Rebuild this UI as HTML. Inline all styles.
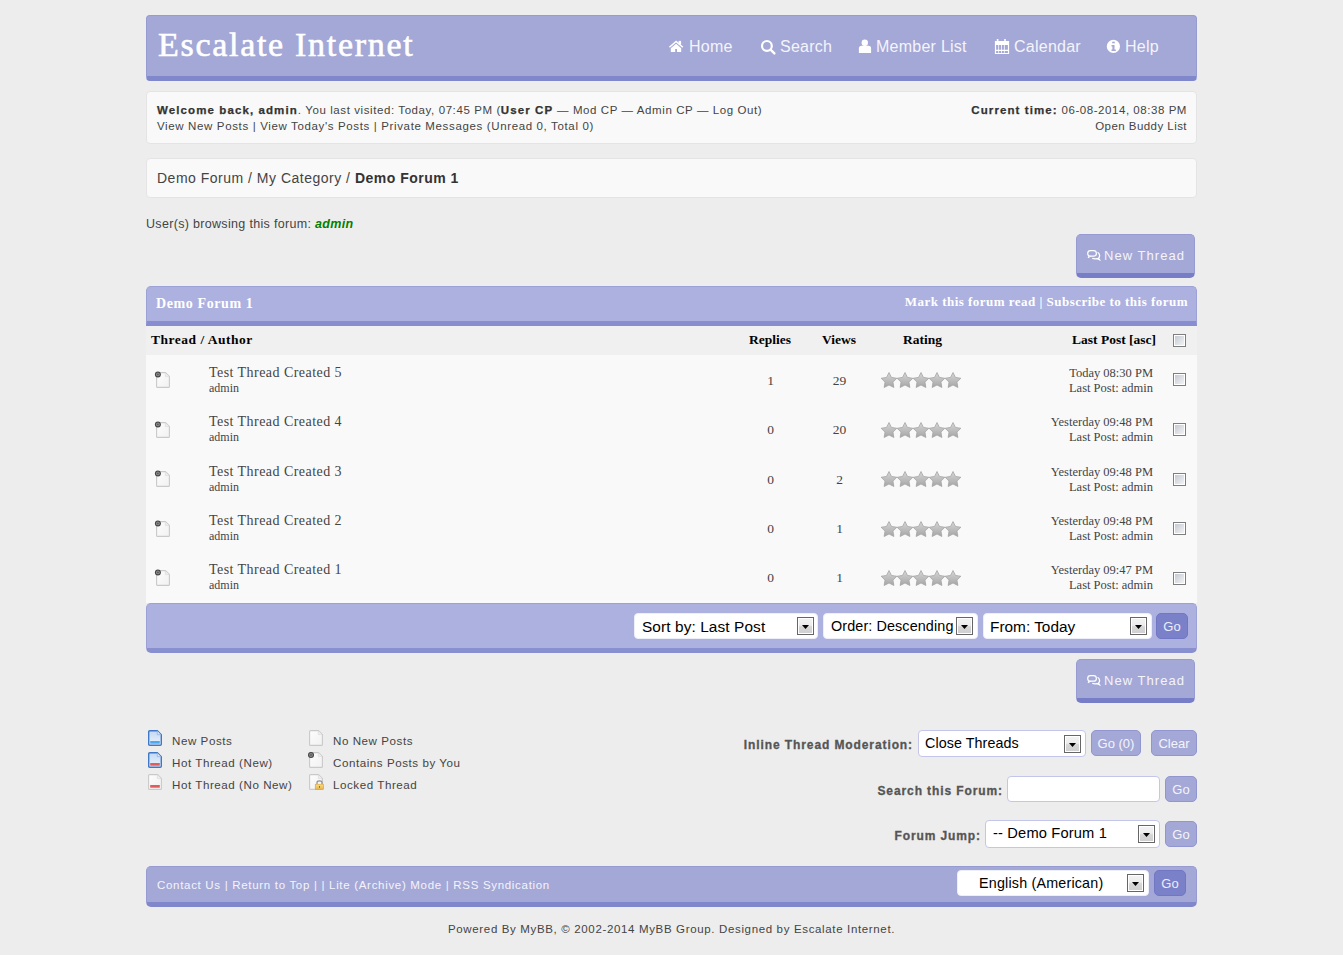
<!DOCTYPE html>
<html><head><meta charset="utf-8">
<style>
*{margin:0;padding:0;box-sizing:border-box}
html,body{width:1343px;height:955px;overflow:hidden;background:#ededed;font-family:"Liberation Sans",sans-serif;color:#444;position:relative}
.a{position:absolute}
.nw{white-space:nowrap}
.serif{font-family:"Liberation Serif",serif}
#hdr{left:146px;top:15px;width:1051px;height:66px;background:#a4a8d6;border:1px solid #969bd2;border-bottom:5px solid #8087cb;border-radius:4px}
#logo{left:158px;top:23px;font-family:"Liberation Serif",serif;font-size:34px;color:#fff;letter-spacing:1.7px;line-height:44px;-webkit-text-stroke:0.6px #fff}
.nav{top:37px;font-size:16px;letter-spacing:0.25px;color:#f4f4fb;line-height:20px}
.panel{background:#f9f9f9;border:1px solid #e4e4e4;border-radius:4px}
.btn{background:#a4a8d6;border:1px solid #969bd2;border-bottom:5px solid #777dc7;border-radius:5px}
.thead{background:#adb1df;border:1px solid #9ca1d6}
.ntt{font-size:13px;letter-spacing:1.05px;color:#f4f4fb;line-height:18px}
.colh{top:332px;font-size:13.5px;font-weight:bold;color:#000;line-height:15px}
.cb{width:13px;height:13px;border:1px solid #7d7f7f;padding:1px;background:linear-gradient(135deg,#c4c9d4,#f3f3f3) content-box,#fff}
.ttl{font-size:14px;color:#444;letter-spacing:0.45px;line-height:16px}
.adm{font-size:12px;color:#444;line-height:14px}
.num{font-size:13.5px;color:#444;text-align:center;line-height:15px}
.lp{font-size:12.5px;color:#444;text-align:right;line-height:15px}
.sel{height:26px;background:#fff;border-radius:4px;border:1px solid #eceef8}
.sel span{position:absolute;top:4px;font-size:15.4px;color:#000;white-space:nowrap;line-height:17px}
.arr{position:absolute;top:3px;width:17px;height:18px;border:1px solid #666;padding:1px;background:linear-gradient(#f2f2f2,#ececec 45%,#d6d6d6 55%,#d0d0d0) content-box,#fff}
.arr:after{content:"";position:absolute;left:4px;top:7px;width:7px;height:4px;background:#000;clip-path:polygon(0 0,100% 0,50% 100%)}
.sel2{border:1px solid #c3c6ea}
.gob{background:#7b81c9;border-radius:5px;color:#eceefa;font-size:13px;text-align:center;line-height:25px;border:1px solid #7177c2}
.lb{height:26px;background:#a4a8d6;border:1px solid #9196d0;border-radius:5px;color:#f4f4fb;font-size:13px;text-align:center;line-height:25px}
.leg{font-size:11.6px;letter-spacing:0.55px;line-height:22px;color:#444;white-space:nowrap}
.vb{color:#333;letter-spacing:1.1px;-webkit-text-stroke:0.25px #333}
.lab{font-size:12px;font-weight:bold;color:#555;letter-spacing:0.9px;-webkit-text-stroke:0.3px #555;line-height:15px}
</style></head><body>
<div id="hdr" class="a"></div>
<div id="logo" class="a nw">Escalate Internet</div>
<div class="a nav nw" style="left:689px">Home</div>
<div class="a nav nw" style="left:780px">Search</div>
<div class="a nav nw" style="left:876px">Member List</div>
<div class="a nav nw" style="left:1014px">Calendar</div>
<div class="a nav nw" style="left:1125px">Help</div>
<div class="a panel" style="left:146px;top:91px;width:1051px;height:53px"></div>
<div class="a nw" style="left:157px;top:102px;font-size:11.5px;letter-spacing:0.59px;line-height:16px"><b class="vb">Welcome back, admin</b>. You last visited: Today, 07:45 PM (<b class="vb">User CP</b> — Mod CP — Admin CP — Log Out)<br><span style="letter-spacing:0.64px">View New Posts | View Today's Posts | Private Messages (Unread 0, Total 0)</span></div>
<div class="a nw" style="right:156px;top:102px;font-size:11.5px;letter-spacing:0.55px;line-height:16px;text-align:right"><b class="vb">Current time:</b> 06-08-2014, 08:38 PM<br><span style="letter-spacing:0.45px">Open Buddy List</span></div>
<div class="a panel" style="left:146px;top:158px;width:1051px;height:40px"></div>
<div class="a nw" style="left:157px;top:169px;font-size:14px;letter-spacing:0.5px;line-height:18px">Demo Forum / My Category / <b style="color:#333">Demo Forum 1</b></div>
<div class="a nw" style="left:146px;top:216px;font-size:12.5px;letter-spacing:0.32px;line-height:16px">User(s) browsing this forum: <b style="color:#008000"><i>admin</i></b></div>
<div class="a btn" style="left:1076px;top:234px;width:119px;height:44px"></div>
<div class="a nw ntt" style="left:1104px;top:247px">New Thread</div>
<div class="a thead" style="left:146px;top:286px;width:1051px;height:40px;border-bottom:5px solid #878dce;border-radius:5px 5px 0 0"></div>
<div class="a nw serif" style="left:156px;top:296px;font-size:14px;font-weight:bold;color:#fff;letter-spacing:0.6px;line-height:16px">Demo Forum 1</div>
<div class="a nw serif" style="right:155px;top:294px;font-size:13px;font-weight:bold;color:#fff;letter-spacing:0.48px;line-height:16px">Mark this forum read | Subscribe to this forum</div>
<div class="a" style="left:146px;top:326px;width:1051px;height:29px;background:#f0f0f0"></div>
<div class="a nw serif colh" style="left:151px;letter-spacing:0.5px">Thread / Author</div>
<div class="a nw serif colh" style="left:749px">Replies</div>
<div class="a nw serif colh" style="left:822px">Views</div>
<div class="a nw serif colh" style="left:903px">Rating</div>
<div class="a nw serif colh" style="right:187px">Last Post [asc]</div>
<div class="a cb" style="left:1173px;top:334px"></div>
<div class="a" style="left:146px;top:355px;width:1051px;height:248px;background:#f9f9f9"></div>
<div class="a nw serif ttl" style="left:209px;top:365px">Test Thread Created 5</div>
<div class="a nw serif adm" style="left:209px;top:381px">admin</div>
<div class="a serif num" style="left:740px;width:61px;top:373px">1</div>
<div class="a serif num" style="left:809px;width:61px;top:373px">29</div>
<div class="a nw serif lp" style="right:190px;top:366px">Today 08:30 PM<br>Last Post: admin</div>
<div class="a cb" style="left:1173px;top:373px"></div>
<div class="a nw serif ttl" style="left:209px;top:414px">Test Thread Created 4</div>
<div class="a nw serif adm" style="left:209px;top:430px">admin</div>
<div class="a serif num" style="left:740px;width:61px;top:422px">0</div>
<div class="a serif num" style="left:809px;width:61px;top:422px">20</div>
<div class="a nw serif lp" style="right:190px;top:415px">Yesterday 09:48 PM<br>Last Post: admin</div>
<div class="a cb" style="left:1173px;top:423px"></div>
<div class="a nw serif ttl" style="left:209px;top:464px">Test Thread Created 3</div>
<div class="a nw serif adm" style="left:209px;top:480px">admin</div>
<div class="a serif num" style="left:740px;width:61px;top:472px">0</div>
<div class="a serif num" style="left:809px;width:61px;top:472px">2</div>
<div class="a nw serif lp" style="right:190px;top:465px">Yesterday 09:48 PM<br>Last Post: admin</div>
<div class="a cb" style="left:1173px;top:473px"></div>
<div class="a nw serif ttl" style="left:209px;top:513px">Test Thread Created 2</div>
<div class="a nw serif adm" style="left:209px;top:529px">admin</div>
<div class="a serif num" style="left:740px;width:61px;top:521px">0</div>
<div class="a serif num" style="left:809px;width:61px;top:521px">1</div>
<div class="a nw serif lp" style="right:190px;top:514px">Yesterday 09:48 PM<br>Last Post: admin</div>
<div class="a cb" style="left:1173px;top:522px"></div>
<div class="a nw serif ttl" style="left:209px;top:562px">Test Thread Created 1</div>
<div class="a nw serif adm" style="left:209px;top:578px">admin</div>
<div class="a serif num" style="left:740px;width:61px;top:570px">0</div>
<div class="a serif num" style="left:809px;width:61px;top:570px">1</div>
<div class="a nw serif lp" style="right:190px;top:563px">Yesterday 09:47 PM<br>Last Post: admin</div>
<div class="a cb" style="left:1173px;top:572px"></div>
<div class="a" style="left:146px;top:603px;width:1051px;height:50px;background:#adb1df;border:1px solid #9ca1d6;border-bottom:5px solid #8990d0;border-radius:5px"></div>
<div class="a sel" style="left:634px;top:613px;width:184px"><span style="left:7px;letter-spacing:0.1px">Sort by: Last Post</span><i class="arr" style="left:162px"></i></div>
<div class="a sel" style="left:823px;top:613px;width:155px"><span style="left:7px;font-size:14.4px;letter-spacing:0.1px">Order: Descending</span><i class="arr" style="left:132px"></i></div>
<div class="a sel" style="left:983px;top:613px;width:169px"><span style="left:6px">From: Today</span><i class="arr" style="left:146px"></i></div>
<div class="a gob" style="left:1156px;top:613px;width:32px;height:26px">Go</div>
<div class="a btn" style="left:1076px;top:659px;width:119px;height:44px"></div>
<div class="a nw ntt" style="left:1104px;top:672px">New Thread</div>
<div class="a leg" style="left:172px;top:729.5px">New Posts<br>Hot Thread (New)<br>Hot Thread (No New)</div>
<div class="a leg" style="left:333px;top:729.5px">No New Posts<br>Contains Posts by You<br>Locked Thread</div>
<div class="a nw lab" style="right:430px;top:738px">Inline Thread Moderation:</div>
<div class="a sel sel2" style="left:918px;top:730px;width:168px;height:27px"><span style="left:6px;font-size:14.3px;letter-spacing:0.08px">Close Threads</span><i class="arr" style="left:145px;top:4px"></i></div>
<div class="a lb" style="left:1091px;top:730px;width:50px">Go (0)</div>
<div class="a lb" style="left:1151px;top:730px;width:46px">Clear</div>
<div class="a nw lab" style="right:340px;top:784px">Search this Forum:</div>
<div class="a" style="left:1007px;top:776px;width:153px;height:26px;background:#fff;border:1px solid #c3c6ea;border-radius:4px"></div>
<div class="a lb" style="left:1165px;top:776px;width:32px;height:26px">Go</div>
<div class="a nw lab" style="right:362px;top:829px">Forum Jump:</div>
<div class="a sel sel2" style="left:985px;top:820px;width:175px;height:28px"><span style="left:7px;font-size:14.7px;letter-spacing:0.15px">-- Demo Forum 1</span><i class="arr" style="left:152px;top:4px"></i></div>
<div class="a lb" style="left:1165px;top:821px;width:32px;height:26px">Go</div>
<div class="a" style="left:146px;top:866px;width:1051px;height:41px;background:#a4a8d6;border:1px solid #969bd2;border-bottom:5px solid #8087cb;border-radius:5px"></div>
<div class="a nw" style="left:157px;top:877px;font-size:11.5px;letter-spacing:0.69px;color:#f4f4fb;line-height:16px">Contact Us | Return to Top | | Lite (Archive) Mode | RSS Syndication</div>
<div class="a sel" style="left:957px;top:870px;width:192px;height:26px"><span style="left:21px;font-size:14.3px;letter-spacing:0.2px">English (American)</span><i class="arr" style="left:169px;top:3px"></i></div>
<div class="a gob" style="left:1154px;top:870px;width:32px;height:26px">Go</div>
<div class="a nw" style="left:448px;top:921px;font-size:11.5px;letter-spacing:0.65px;color:#444;line-height:16px">Powered By MyBB, © 2002-2014 MyBB Group. Designed by Escalate Internet.</div>
<svg class="a" style="left:0;top:0;pointer-events:none" width="1343" height="955" viewBox="0 0 1343 955">
<defs>
<linearGradient id="gw" x1="0" y1="0" x2="1" y2="1"><stop offset="0" stop-color="#fdfdfd"/><stop offset="1" stop-color="#f1f1f1"/></linearGradient>
<linearGradient id="gb" x1="0" y1="0" x2="0" y2="1"><stop offset="0" stop-color="#c4d9f4"/><stop offset="1" stop-color="#eaf3fd"/></linearGradient>
<linearGradient id="gl" x1="0" y1="0" x2="0" y2="1"><stop offset="0" stop-color="#f8dc86"/><stop offset="1" stop-color="#e8b448"/></linearGradient>
<linearGradient id="sg" x1="0" y1="0" x2="0" y2="1"><stop offset="0" stop-color="#d6d6d6"/><stop offset="1" stop-color="#a6a6a6"/></linearGradient>
<symbol id="pg" overflow="visible"><path d="M0.6 1.6 Q0.6 0.6 1.6 0.6 H9.4 L13.4 4.6 V14.4 Q13.4 15.4 12.4 15.4 H1.6 Q0.6 15.4 0.6 14.4 Z" fill="url(#gw)" stroke="#c9c9c9" stroke-width="1.1"/><path d="M9.4 0.9 V4.6 H13.2" fill="#ededed" stroke="#dedede" stroke-width="0.8"/></symbol>
<symbol id="pgb" overflow="visible"><path d="M0.7 1.8 Q0.7 0.7 1.8 0.7 H9.3 L13.3 4.7 V14.2 Q13.3 15.3 12.2 15.3 H1.8 Q0.7 15.3 0.7 14.2 Z" fill="url(#gb)" stroke="#3f78c6" stroke-width="1.4"/><path d="M9.3 1 V4.7 H13" fill="#dbe8f8" stroke="#8fb3e0" stroke-width="0.8"/></symbol>
<symbol id="dot" overflow="visible"><circle cx="0" cy="0" r="3" fill="#444"/><circle cx="0" cy="0" r="1.9" fill="#8e8e8e"/><circle cx="0" cy="0" r="0.9" fill="#5a5a5a"/></symbol>
<symbol id="star" overflow="visible"><path d="M8.00 0.00 L10.47 4.90 L15.89 5.74 L11.99 9.60 L12.88 15.01 L8.00 12.50 L3.12 15.01 L4.01 9.60 L0.11 5.74 L5.53 4.90 Z" fill="url(#sg)" stroke="#9e9e9e" stroke-width="0.7" stroke-linejoin="round"/></symbol>
</defs>
<g fill="#fff" stroke="none">
<path d="M669.4 47.2 L676.1 41.4 L682.8 47.2" fill="none" stroke="#fff" stroke-width="1.5"/>
<rect x="678.6" y="40.9" width="2.5" height="3.6"/>
<path d="M670.8 48.2 L676.1 43.8 L681.2 48.2 V52 H677 V49 H675.2 V52 H670.8 Z"/>
<circle cx="766.9" cy="45.9" r="4.9" fill="none" stroke="#fff" stroke-width="2.2"/>
<path d="M770.8 49.8 L774.4 53.4" stroke="#fff" stroke-width="2.4" stroke-linecap="round"/>
<circle cx="864.8" cy="42.7" r="3.2"/>
<path d="M858.9 53 V48.6 Q858.9 45.8 861.6 45.8 H868.4 Q871.1 45.8 871.1 48.6 V53 Z"/>
<path d="M994.9 41 H1009.1 V53.9 H994.9 Z M996.1 45 V49.8 H1007.9 V45 Z M996.1 51 V52.9 H1007.9 V51 Z" fill-rule="evenodd"/>
<rect x="996.8" y="39" width="1.6" height="3"/><rect x="1004.2" y="39" width="1.6" height="3"/>
<path d="M998.6 45 V52.9 M1001.5 45 V52.9 M1004.4 45 V52.9" stroke="#fff" stroke-width="0.8"/>
<circle cx="1113.4" cy="46.4" r="6.6"/>
<g fill="#a4a8d6"><rect x="1112.2" y="41.7" width="2.6" height="1.6"/><path d="M1111.5 45.1 H1114.5 V49.5 H1115.8 V50.9 H1111.5 V49.5 H1112.4 V46.4 H1111.5 Z"/></g>
</g>
<g id="nti" fill="none" stroke="#fff" stroke-width="1.2">
<rect x="1087.7" y="250.6" width="8.7" height="5.6" rx="2.8"/>
<path d="M1089 256 L1088.1 257.8 L1090.6 256.3" stroke-width="1"/>
<path d="M1097.6 252.3 C1099.9 253.6 1100.3 256.9 1098.4 258.2 L1099.4 259.6 L1097 258.7 C1095.3 258.9 1093.6 258.8 1092.3 258.4" stroke-width="1.3"/>
</g>
<use href="#nti" transform="translate(0,425)"/>

<use href="#pg" x="156" y="372"/><use href="#dot" x="157.9" y="374.4"/>
<use href="#star" x="881" y="372.5"/><use href="#star" x="897" y="372.5"/><use href="#star" x="913" y="372.5"/><use href="#star" x="929" y="372.5"/><use href="#star" x="945" y="372.5"/>
<use href="#pg" x="156" y="422"/><use href="#dot" x="157.9" y="424.4"/>
<use href="#star" x="881" y="422.5"/><use href="#star" x="897" y="422.5"/><use href="#star" x="913" y="422.5"/><use href="#star" x="929" y="422.5"/><use href="#star" x="945" y="422.5"/>
<use href="#pg" x="156" y="471"/><use href="#dot" x="157.9" y="473.4"/>
<use href="#star" x="881" y="471.5"/><use href="#star" x="897" y="471.5"/><use href="#star" x="913" y="471.5"/><use href="#star" x="929" y="471.5"/><use href="#star" x="945" y="471.5"/>
<use href="#pg" x="156" y="521"/><use href="#dot" x="157.9" y="523.4"/>
<use href="#star" x="881" y="521.5"/><use href="#star" x="897" y="521.5"/><use href="#star" x="913" y="521.5"/><use href="#star" x="929" y="521.5"/><use href="#star" x="945" y="521.5"/>
<use href="#pg" x="156" y="570"/><use href="#dot" x="157.9" y="572.4"/>
<use href="#star" x="881" y="570.5"/><use href="#star" x="897" y="570.5"/><use href="#star" x="913" y="570.5"/><use href="#star" x="929" y="570.5"/><use href="#star" x="945" y="570.5"/>

<use href="#pgb" x="148" y="730"/><rect x="150.2" y="741" width="9.6" height="2.7" fill="#4aa9f0"/>
<use href="#pgb" x="148" y="752"/><rect x="150.2" y="763" width="9.6" height="2.7" fill="#e45b5b"/>
<use href="#pg" x="148" y="774"/><rect x="150.2" y="785" width="9.6" height="2.7" fill="#e45b5b"/>
<use href="#pg" x="309" y="730"/>
<use href="#pg" x="309" y="752"/><use href="#dot" x="311" y="755"/>
<use href="#pg" x="309" y="774"/>
<path d="M317 784.3 V782.6 Q317 780.8 319.5 780.8 Q322 780.8 322 782.6 V784.3" fill="none" stroke="#8f8f8f" stroke-width="1.2"/>
<rect x="315.2" y="784.2" width="8.5" height="5.2" fill="url(#gl)" stroke="#d49a2a" stroke-width="0.5"/>
<rect x="319" y="786" width="1" height="1.8" fill="#a86e10"/>
</svg>
</body></html>
